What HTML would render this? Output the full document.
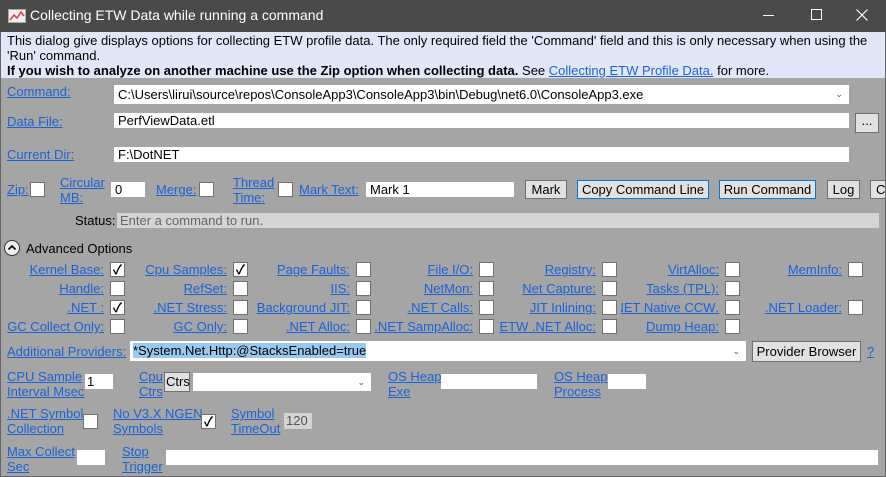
<!DOCTYPE html>
<html><head><meta charset="utf-8"><style>
*{box-sizing:border-box;margin:0;padding:0}
body{width:886px;height:477px;overflow:hidden;background:#a5a5a5;font-family:"Liberation Sans","Noto Sans CJK SC",sans-serif;font-size:13px;color:#000;position:relative}
.a{position:absolute;white-space:nowrap}
.l{position:absolute;white-space:nowrap;color:#1a63d6;text-decoration:underline;line-height:15px}
.r{text-align:right}
.in{position:absolute;background:#fff;line-height:19px;padding-left:4px}
.cb{position:absolute;width:15px;height:15px;background:#fff;border:1px solid #707070;font-size:13px;line-height:13px;text-align:center;font-weight:bold}
.bt{position:absolute;background:#e1e1e1;border:1px solid #707070;text-align:center;line-height:19px}
.bb{border-color:#0078d7}
</style></head><body>
<div class="a" style="left:0;top:0;width:886px;height:32px;background:#4a4a4a"></div>
<svg class="a" style="left:8px;top:9px" width="18" height="14"><rect x="0.5" y="0.5" width="17" height="13" fill="#eee" stroke="#aaa"/><polyline points="2,11 6,6 9,9 13,3 16,7" fill="none" stroke="#d04040" stroke-width="1.5"/></svg>
<div class="a" style="left:30px;top:7px;color:#fff;font-size:14px">Collecting ETW Data while running a command</div>
<div class="a" style="left:763px;top:15px;width:11px;height:1px;background:#fff"></div>
<div class="a" style="left:811px;top:9px;width:11px;height:11px;border:1px solid #fff"></div>
<svg class="a" style="left:856px;top:9px" width="12" height="12"><path d="M0.5 0.5L11.5 11.5M11.5 0.5L0.5 11.5" stroke="#fff" stroke-width="1.2"/></svg>
<div class="a" style="left:0;top:32px;width:886px;height:46px;background:#e1e7f8"></div>
<div class="a" style="left:7px;top:33px;line-height:15px">This dialog give displays options for collecting ETW profile data. The only required field the 'Command' field and this is only necessary when using the<br>'Run' command.</div>
<div class="a" style="left:7px;top:63px;line-height:15px"><b>If you wish to analyze on another machine use the Zip option when collecting data.</b> See <span style="color:#1a63d6;text-decoration:underline">Collecting ETW Profile Data.</span> for more.</div>

<div class="l" style="left:7px;top:84px">Command:</div>
<div class="in" style="left:114px;top:85px;width:735px">C:\Users\lirui\source\repos\ConsoleApp3\ConsoleApp3\bin\Debug\net6.0\ConsoleApp3.exe<span style="position:absolute;right:6px;top:0;font-size:9px;color:#555">⌄</span></div>
<div class="l" style="left:7px;top:114px">Data File:</div>
<div class="in" style="left:114px;top:113px;width:735px;height:15px;line-height:15px">PerfViewData.etl</div>
<div class="bt" style="left:855px;top:113px;width:24px;height:20px;line-height:14px">...</div>
<div class="l" style="left:7px;top:147px">Current Dir:</div>
<div class="in" style="left:114px;top:147px;width:735px;height:15px;line-height:15px">F:\DotNET</div>

<div class="l" style="left:7px;top:182px">Zip:</div><div class="cb" style="left:30px;top:182px"></div>
<div class="l" style="left:60px;top:175px">Circular<br>MB:</div>
<div class="in" style="left:111px;top:182px;width:34px;height:15px;line-height:15px">0</div>
<div class="l" style="left:156px;top:182px">Merge:</div><div class="cb" style="left:199px;top:182px"></div>
<div class="l" style="left:233px;top:175px">Thread<br>Time:</div><div class="cb" style="left:278px;top:182px"></div>
<div class="l" style="left:299px;top:182px">Mark Text:</div>
<div class="in" style="left:366px;top:182px;width:148px;height:15px;line-height:15px">Mark 1</div>
<div class="bt" style="left:525px;top:180px;width:42px;height:19px;line-height:17px">Mark</div>
<div class="bt bb" style="left:577px;top:180px;width:132px;height:19px;line-height:17px">Copy Command Line</div>
<div class="bt bb" style="left:719px;top:180px;width:97px;height:19px;line-height:17px">Run Command</div>
<div class="bt" style="left:827px;top:180px;width:33px;height:19px;line-height:17px">Log</div>
<div class="bt" style="left:870px;top:180px;width:30px;height:19px;line-height:17px;text-align:left;padding-left:5px">C</div>
<div class="a" style="left:75px;top:213px">Status:</div>
<div class="a" style="left:117px;top:213px;width:762px;height:15px;background:#d4d4d4;color:#666;padding-left:3px;line-height:15px">Enter a command to run.</div>

<div class="a" style="left:4px;top:240px;width:16px;height:16px;border:1px solid #333;border-radius:50%;background:#eee"></div>
<svg class="a" style="left:4px;top:240px" width="16" height="16"><path d="M4.5 9.5L8 6L11.5 9.5" fill="none" stroke="#000" stroke-width="1.6"/></svg>
<div class="a" style="left:26px;top:241px">Advanced Options</div>

<div class="l r" style="right:782px;top:262px">Kernel Base:</div><div class="cb" style="left:110px;top:262px">✓</div>
<div class="l r" style="right:659px;top:262px">Cpu Samples:</div><div class="cb" style="left:233px;top:262px">✓</div>
<div class="l r" style="right:536px;top:262px">Page Faults:</div><div class="cb" style="left:356px;top:262px"></div>
<div class="l r" style="right:413px;top:262px">File I/O:</div><div class="cb" style="left:479px;top:262px"></div>
<div class="l r" style="right:290px;top:262px">Registry:</div><div class="cb" style="left:602px;top:262px"></div>
<div class="l r" style="right:167px;top:262px">VirtAlloc:</div><div class="cb" style="left:725px;top:262px"></div>
<div class="l r" style="right:44px;top:262px">MemInfo:</div><div class="cb" style="left:848px;top:262px"></div>

<div class="l r" style="right:782px;top:281px">Handle:</div><div class="cb" style="left:110px;top:281px"></div>
<div class="l r" style="right:659px;top:281px">RefSet:</div><div class="cb" style="left:233px;top:281px"></div>
<div class="l r" style="right:536px;top:281px">IIS:</div><div class="cb" style="left:356px;top:281px"></div>
<div class="l r" style="right:413px;top:281px">NetMon:</div><div class="cb" style="left:479px;top:281px"></div>
<div class="l r" style="right:290px;top:281px">Net Capture:</div><div class="cb" style="left:602px;top:281px"></div>
<div class="l r" style="right:167px;top:281px">Tasks (TPL):</div><div class="cb" style="left:725px;top:281px"></div>

<div class="l r" style="right:782px;top:300px">.NET :</div><div class="cb" style="left:110px;top:300px">✓</div>
<div class="l r" style="right:659px;top:300px">.NET Stress:</div><div class="cb" style="left:233px;top:300px"></div>
<div class="l r" style="right:536px;top:300px">Background JIT:</div><div class="cb" style="left:356px;top:300px"></div>
<div class="l r" style="right:413px;top:300px">.NET Calls:</div><div class="cb" style="left:479px;top:300px"></div>
<div class="l r" style="right:290px;top:300px">JIT Inlining:</div><div class="cb" style="left:602px;top:300px"></div>
<div class="l r" style="right:167px;top:300px;width:98px;overflow:hidden;direction:rtl">.NET Native CCW:</div><div class="cb" style="left:725px;top:300px"></div>
<div class="l r" style="right:44px;top:300px">.NET Loader:</div><div class="cb" style="left:848px;top:300px"></div>

<div class="l r" style="right:782px;top:319px">GC Collect Only:</div><div class="cb" style="left:110px;top:319px"></div>
<div class="l r" style="right:659px;top:319px">GC Only:</div><div class="cb" style="left:233px;top:319px"></div>
<div class="l r" style="right:536px;top:319px">.NET Alloc:</div><div class="cb" style="left:356px;top:319px"></div>
<div class="l r" style="right:413px;top:319px">.NET SampAlloc:</div><div class="cb" style="left:479px;top:319px"></div>
<div class="l r" style="right:290px;top:319px">ETW .NET Alloc:</div><div class="cb" style="left:602px;top:319px"></div>
<div class="l r" style="right:167px;top:319px">Dump Heap:</div><div class="cb" style="left:725px;top:319px"></div>

<div class="l" style="left:7px;top:344px">Additional Providers:</div>
<div class="in" style="left:130px;top:341px;width:616px;height:20px;line-height:20px;padding-left:3px"><span style="background:#99c9ef">*System.Net.Http:@StacksEnabled=true</span><span style="position:absolute;right:6px;top:0;font-size:9px;color:#555">⌄</span></div>
<div class="bt" style="left:752px;top:341px;width:109px;height:21px">Provider Browser</div>
<div class="l" style="left:867px;top:344px">?</div>

<div class="l" style="left:7px;top:369px">CPU Sample<br>Interval Msec</div>
<div class="in" style="left:85px;top:374px;width:28px;height:15px;line-height:15px;padding-left:2px">1</div>
<div class="l" style="left:139px;top:369px">Cpu<br>Ctrs</div>
<div class="a" style="left:164px;top:372px;width:26px;height:20px;background:#e1e1e1;border:1px solid #707070;line-height:18px;padding-left:1px">Ctrs</div>
<div class="in" style="left:193px;top:373px;width:178px;height:18px"><span style="position:absolute;right:6px;top:0;font-size:9px;color:#555">⌄</span></div>
<div class="l" style="left:388px;top:369px">OS Heap<br>Exe</div>
<div class="in" style="left:441px;top:374px;width:96px;height:15px"></div>
<div class="l" style="left:554px;top:369px">OS Heap<br>Process</div>
<div class="in" style="left:608px;top:374px;width:38px;height:15px"></div>

<div class="l" style="left:7px;top:406px">.NET Symbol<br>Collection</div>
<div class="cb" style="left:83px;top:414px"></div>
<div class="l" style="left:113px;top:406px">No V3.X NGEN<br>Symbols</div>
<div class="cb" style="left:201px;top:414px">✓</div>
<div class="l" style="left:231px;top:406px">Symbol<br>TimeOut</div>
<div class="a" style="left:284px;top:413px;width:28px;height:16px;background:#d4d4d4;color:#555;line-height:16px;padding-left:2px">120</div>

<div class="l" style="left:7px;top:444px">Max Collect<br>Sec</div>
<div class="in" style="left:77px;top:450px;width:28px;height:15px"></div>
<div class="l" style="left:122px;top:444px">Stop<br>Trigger</div>
<div class="in" style="left:166px;top:450px;width:712px;height:15px"></div>
<div class="a" style="left:0;top:32px;width:1px;height:445px;background:#666"></div>
<div class="a" style="right:0;top:32px;width:1px;height:445px;background:#666"></div>
<div class="a" style="left:0;bottom:0;width:886px;height:1px;background:#666"></div>
</body></html>
